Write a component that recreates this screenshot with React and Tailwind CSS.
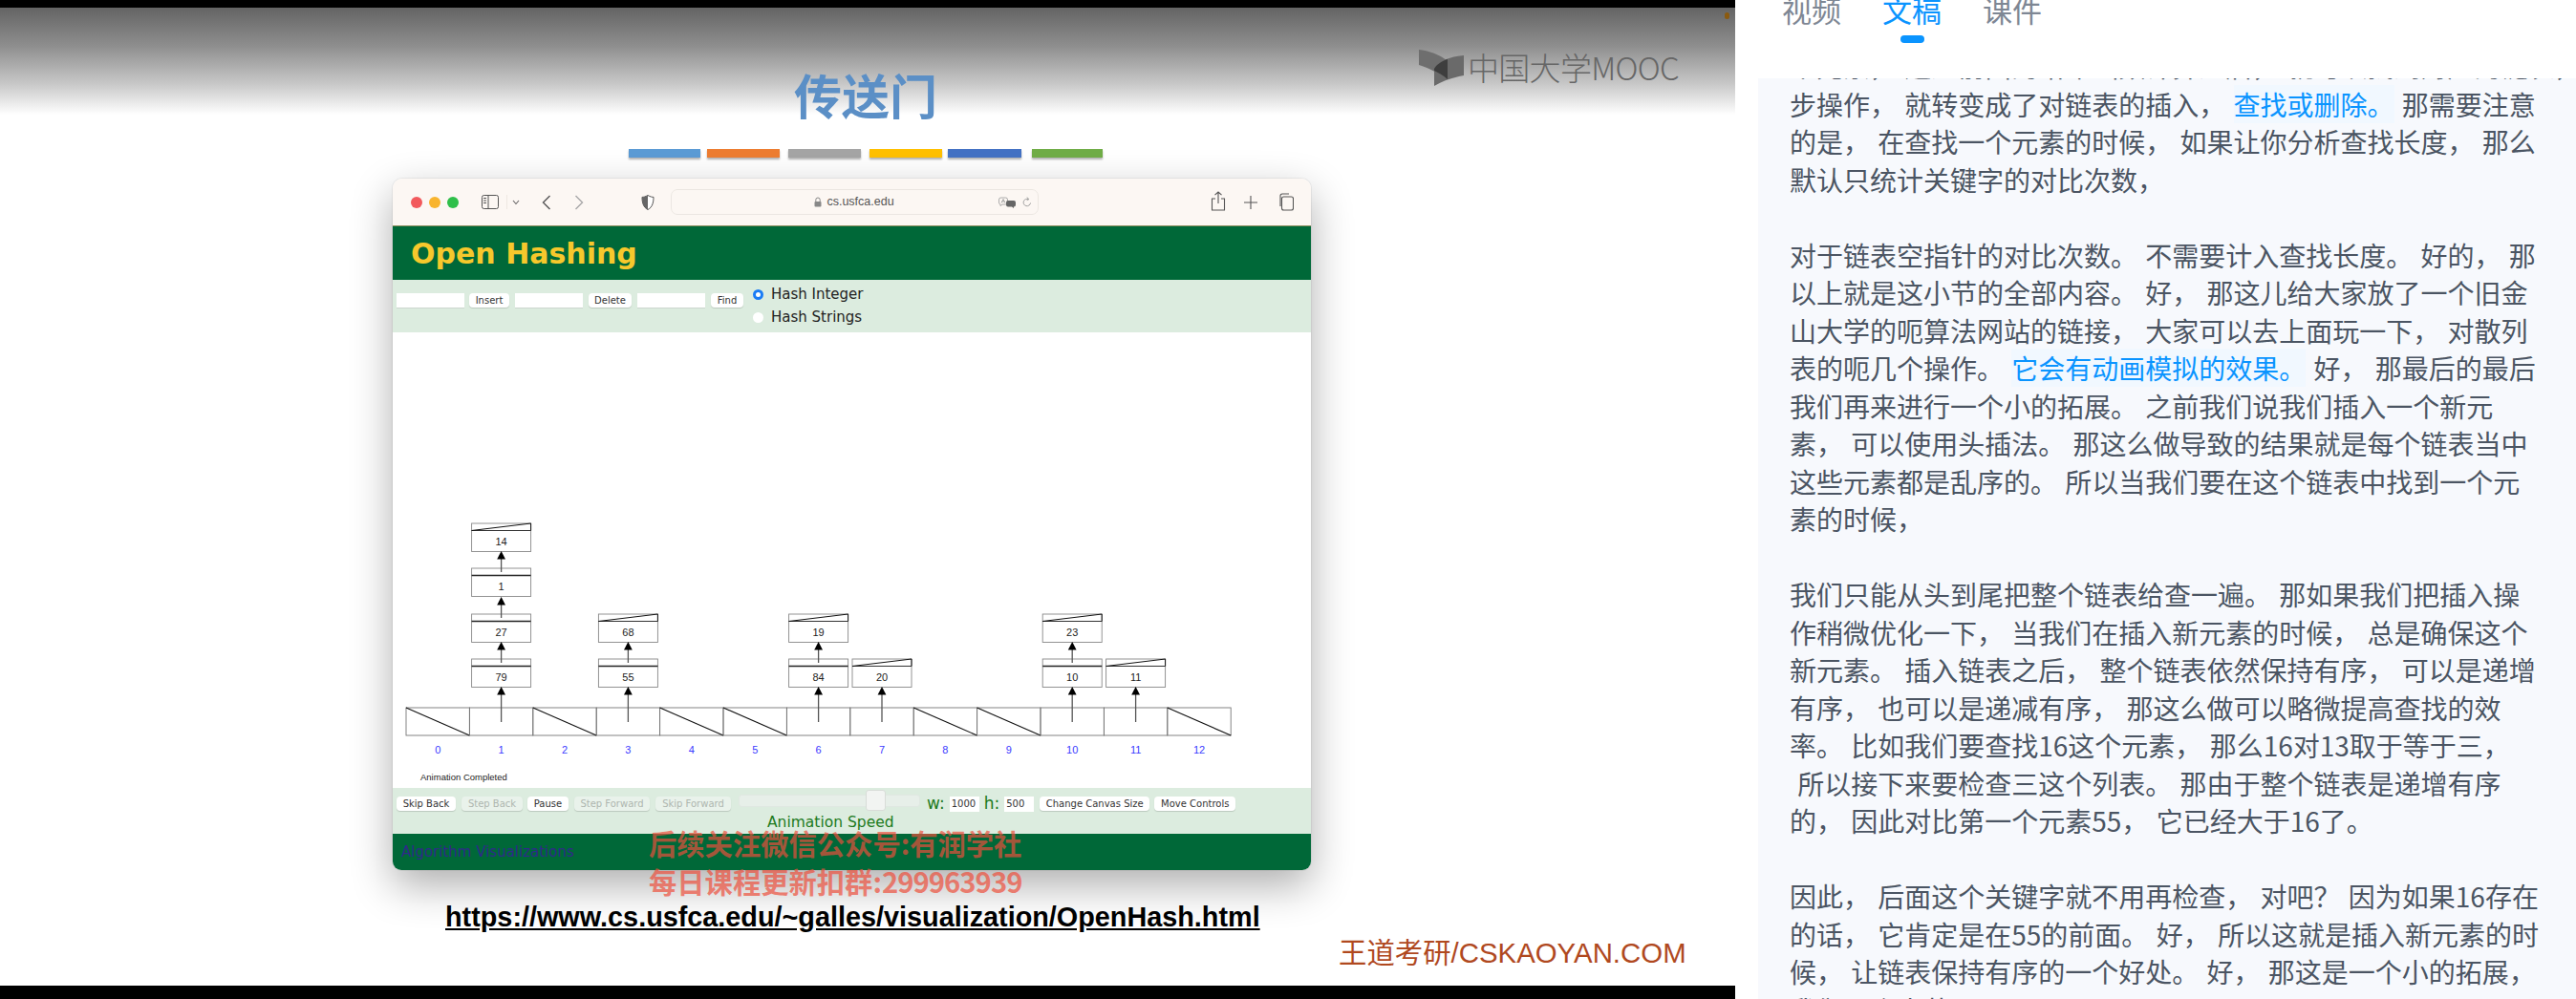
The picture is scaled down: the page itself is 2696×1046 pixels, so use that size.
const CJK = "'Noto Sans CJK SC','Noto Sans',sans-serif";
const ARIAL_CJK = "'Liberation Sans','Noto Sans CJK SC',sans-serif";

const bars = [
  { w: 75, c: "bg-[#5b9bd5]", ml: "ml-0" },
  { w: 76, c: "bg-[#ed7d31]", ml: "ml-[7px]" },
  { w: 76, c: "bg-[#a5a5a5]", ml: "ml-[9px]" },
  { w: 76, c: "bg-[#ffc000]", ml: "ml-[9px]" },
  { w: 77, c: "bg-[#4472c4]", ml: "ml-[6px]" },
  { w: 74, c: "bg-[#70ad47]", ml: "ml-[11px]" },
];

function Btn({ children, w, off }) {
  return (
    <div
      style={{ width: w }}
      className={
        "h-[15px] shrink-0 rounded-[4px] flex items-center justify-center text-[10px] font-['DejaVu_Sans',sans-serif] whitespace-nowrap shadow-[0_1px_1px_rgba(0,0,0,0.15)] " +
        (off ? "bg-[#e9f2eb] text-[#aeb6af]" : "bg-white text-[#333]")
      }
    >
      {children}
    </div>
  );
}

function Field({ w }) {
  return <div style={{ width: w }} className="h-[16px] shrink-0 bg-white border-b border-[#ccd6ce]" />;
}

const X0 = 14;
const CW = 66.4;
const cx = (i) => X0 + CW * i + CW / 2;
const BY = 393;
const rows = [200, 247, 295, 342];
const nodes = [
  { b: 1, r: 3, t: "79", end: false },
  { b: 1, r: 2, t: "27", end: false },
  { b: 1, r: 1, t: "1", end: false },
  { b: 1, r: 0, t: "14", end: true },
  { b: 3, r: 3, t: "55", end: false },
  { b: 3, r: 2, t: "68", end: true },
  { b: 6, r: 3, t: "84", end: false },
  { b: 6, r: 2, t: "19", end: true },
  { b: 7, r: 3, t: "20", end: true },
  { b: 10, r: 3, t: "10", end: false },
  { b: 10, r: 2, t: "23", end: true },
  { b: 11, r: 3, t: "11", end: true },
];
const emptyB = [0, 2, 4, 5, 8, 9, 12];

function Arrow({ x, y1, y2 }) {
  return (
    <g>
      <line x1={x} x2={x} y1={y1} y2={y2 + 8} stroke="#555" strokeWidth="1.3" />
      <path d={`M${x} ${y2}l-4.4 8.5h8.8z`} fill="#000" />
    </g>
  );
}

function Graph() {
  return (
    <svg width="961" height="477" className="block" style={{ fontFamily: "'Liberation Sans',sans-serif" }}>
      {Array.from({ length: 13 }).map((_, i) => (
        <g key={i}>
          <rect x={X0 + CW * i} y={BY} width={CW} height={29} fill="none" stroke="#777" strokeWidth="0.9" />
          {emptyB.includes(i) && (
            <line x1={X0 + CW * i} y1={BY} x2={X0 + CW * (i + 1)} y2={BY + 29} stroke="#111" strokeWidth="1.1" />
          )}
          <text x={cx(i)} y={441} textAnchor="middle" fontSize="11" fill="#3a3aff">{i}</text>
        </g>
      ))}
      {nodes.map((n, i) => {
        const y = rows[n.r];
        const x = cx(n.b);
        return (
          <g key={i}>
            <rect x={x - 31} y={y} width={62} height={29.5} fill="#fff" stroke="#888" strokeWidth="0.9" />
            {n.end ? (
              <>
                <line x1={x - 31} y1={y + 7.5} x2={x + 31} y2={y + 7.5} stroke="#333" strokeWidth="1" />
                <line x1={x - 31} y1={y + 7.5} x2={x + 31} y2={y} stroke="#111" strokeWidth="1" />
                <line x1={x + 31} y1={y} x2={x + 31} y2={y + 7.5} stroke="#111" strokeWidth="1" />
              </>
            ) : (
              <line x1={x - 31} y1={y + 7.5} x2={x + 31} y2={y + 7.5} stroke="#222" strokeWidth="1.5" />
            )}
            <text x={x} y={y + 23} textAnchor="middle" fontSize="11" fill="#222">{n.t}</text>
          </g>
        );
      })}
      {[1, 3, 6, 7, 10, 11].map((b) => (
        <Arrow key={b} x={cx(b)} y1={BY + 15} y2={371} />
      ))}
      {[
        [1, 346, 324],
        [1, 299, 277],
        [1, 251, 229],
        [3, 346, 324],
        [6, 346, 324],
        [10, 346, 324],
      ].map(([b, a, c], i) => (
        <Arrow key={i} x={cx(b)} y1={a} y2={c} />
      ))}
      <text x="29" y="469" fontSize="9.5" fill="#222">Animation Completed</text>
    </svg>
  );
}

function Logo() {
  return (
    <div className="flex items-center h-[39px] mr-[59px] ml-auto -mt-[1px]">
      <svg width="47" height="38" viewBox="0 0 47 38" className="shrink-0 mr-[4px]">
        <path d="M0 0 C10 1 22 5 30 12 L30 31 C22 25 10 19 0 16 Z" fill="#6e6e6e" />
        <path d="M16 38 L16 20 C20 12 32 7 47 6 L47 27 C36 29 26 32 16 38 Z" fill="#6a6a6a" />
        <path d="M16 20 C19 15 24 12 30 10 L30 31 C26 27 20 24 16 22 Z" fill="#3e3e3e" />
      </svg>
      <span className="text-[33px] leading-[39px] text-[#666] tracking-[-0.7px] whitespace-nowrap" style={{ fontFamily: CJK, fontWeight: 300 }}>
        中国大学MOOC
      </span>
    </div>
  );
}

const B = ({ children }) => (
  <span className="text-[#0a94ff] bg-[#f1f8ff]">{children}</span>
);

const lines = [
  "个元素， 通过前面的哈希函数计算之后， 就可以找到对应的链表，",
  <>步操作， 就转变成了对链表的插入， <B>查找或删除。</B> 那需要注意</>,
  "的是， 在查找一个元素的时候， 如果让你分析查找长度， 那么",
  "默认只统计关键字的对比次数，",
  "",
  "对于链表空指针的对比次数。 不需要计入查找长度。 好的， 那",
  "以上就是这小节的全部内容。 好， 那这儿给大家放了一个旧金",
  "山大学的呃算法网站的链接， 大家可以去上面玩一下， 对散列",
  <>表的呃几个操作。 <B>它会有动画模拟的效果。</B> 好， 那最后的最后</>,
  "我们再来进行一个小的拓展。 之前我们说我们插入一个新元",
  "素， 可以使用头插法。 那这么做导致的结果就是每个链表当中",
  "这些元素都是乱序的。 所以当我们要在这个链表中找到一个元",
  "素的时候，",
  "",
  "我们只能从头到尾把整个链表给查一遍。 那如果我们把插入操",
  "作稍微优化一下， 当我们在插入新元素的时候， 总是确保这个",
  "新元素。 插入链表之后， 整个链表依然保持有序， 可以是递增",
  "有序， 也可以是递减有序， 那这么做可以略微提高查找的效",
  "率。 比如我们要查找16这个元素， 那么16对13取于等于三，",
  " 所以接下来要检查三这个列表。 那由于整个链表是递增有序",
  "的， 因此对比第一个元素55， 它已经大于16了。",
  "",
  "因此， 后面这个关键字就不用再检查， 对吧？ 因为如果16存在",
  "的话， 它肯定是在55的前面。 好， 所以这就是插入新元素的时",
  "候， 让链表保持有序的一个好处。 好， 那这是一个小的拓展，",
  "我们下个小节再见。",
];

export default function App() {
  return (
    <div className="flex w-[2696px] h-[1046px] overflow-hidden bg-white">
      <div className="w-[1816px] shrink-0 flex flex-col bg-black">
        <div className="h-[8px] shrink-0" />
        <div className="relative h-[1024px] shrink-0 bg-white bg-[linear-gradient(to_bottom,#646464_0px,#8e8e8e_40px,#c8c8c8_80px,#ffffff_112px)] flex flex-col">
          <div className="flex items-start pt-[44px] pl-[831px] h-[148px] shrink-0">
            <div className="text-[50px] leading-[60px] mt-[16px] font-bold text-[#5b8fc6] whitespace-nowrap" style={{ fontFamily: CJK }}>
              传送门
            </div>
            <Logo />
          </div>
          <div className="flex pl-[658px] h-[31px] shrink-0">
            {bars.map((b, i) => (
              <div key={i} style={{ width: b.w }} className={"h-[9px] shadow-[0_2px_2px_rgba(0,0,0,0.3)] " + b.c + " " + b.ml} />
            ))}
          </div>
          <div className="ml-[411px] w-[961px] shrink-0 rounded-t-[10px] rounded-b-[9px] overflow-hidden shadow-[0_0_0_1px_rgba(0,0,0,0.05),0_16px_44px_rgba(0,0,0,0.32)] flex flex-col">
            <div className="h-[50px] bg-[#fcf7f3] border-b border-[#8a8a5a] flex items-center relative shrink-0">
              <span className="ml-[19px] w-[12px] h-[12px] rounded-full bg-[#f2595c]" />
              <span className="ml-[7px] w-[12px] h-[12px] rounded-full bg-[#f8b42e]" />
              <span className="ml-[7px] w-[12px] h-[12px] rounded-full bg-[#2fbf4a]" />
              <svg width="18" height="15" viewBox="0 0 18 15" className="ml-[24px]" fill="none" stroke="#555" strokeWidth="1">
                <rect x="0.5" y="0.5" width="17" height="14" rx="2" />
                <path d="M7 1v13" />
                <path d="M2 3.5h3M2 6h3M2 8.5h3" />
              </svg>
              <span className="ml-[8px] w-[1px] h-[15px] bg-[#eee8e2]" />
              <svg width="8" height="6" viewBox="0 0 8 6" className="ml-[5px]" fill="none" stroke="#666" strokeWidth="1.1"><path d="M1 1l3 3.5L7 1" /></svg>
              <svg width="10" height="16" viewBox="0 0 10 16" className="ml-[23px]" fill="none" stroke="#555" strokeWidth="1.4"><path d="M8.5 1L1.5 8l7 7" /></svg>
              <svg width="10" height="16" viewBox="0 0 10 16" className="ml-[24px]" fill="none" stroke="#a8a8a8" strokeWidth="1.4"><path d="M1.5 1l7 7-7 7" /></svg>
              <svg width="14" height="16" viewBox="0 0 14 16" className="ml-[60px]"><path d="M7 0.5C4.5 2 2.5 2.4 1 2.4c0 5 1 10.6 6 13.1 5-2.5 6-8.1 6-13.1C11.5 2.4 9.5 2 7 .5z" fill="#fff" stroke="#555" strokeWidth="1" /><path d="M7 0.5C4.5 2 2.5 2.4 1 2.4c0 5 1 10.6 6 13.1z" fill="#666" /></svg>
              <div className="ml-[17px] w-[385px] h-[27px] border border-[#ece7e2] rounded-[7px] relative flex items-center justify-center">
                <svg width="8" height="11" viewBox="0 0 8 11" className="mr-[5px] ml-[-1px]"><path d="M1.8 5V3.2a2.2 2.2 0 014.4 0V5" fill="none" stroke="#888" strokeWidth="1" /><rect x="0.5" y="5" width="7" height="5.5" rx="1" fill="#888" /></svg>
                <span className="text-[12.5px] text-[#555] font-['Liberation_Sans',sans-serif]">cs.usfca.edu</span>
                <svg width="19" height="12" viewBox="0 0 19 12" className="absolute right-[22px] top-[7px]" fill="none" stroke="#999" strokeWidth="0.8"><path d="M2.5 1h5a2 2 0 012 2v3a2 2 0 01-2 2H4L2 9.5V8A2 2 0 01.5 6V3a2 2 0 012-2z" /><path d="M3 6.5L5 2.5l2 4M3.8 5h2.4" /><path d="M10 4h6a2 2 0 012 2v2.5a2 2 0 01-2 2V12l-2-1.5h-4a2 2 0 01-2-2V6a2 2 0 012-2z" fill="#666" stroke="none" /></svg>
                <svg width="10" height="12" viewBox="0 0 10 12" className="absolute right-[6px] top-[7px]" fill="none" stroke="#999" strokeWidth="0.9"><path d="M8.5 6.5a3.7 3.7 0 11-2-3.8M5 0.5l1.7 2.2-2 1" /></svg>
              </div>
              <svg width="16" height="21" viewBox="0 0 16 21" className="absolute left-[856px] top-[13px]" fill="none" stroke="#555" strokeWidth="1.1"><path d="M5 8H1.5v12h13V8H11M8 13V1M4.5 4.2L8 1l3.5 3.2" /></svg>
              <svg width="14" height="14" viewBox="0 0 14 14" className="absolute left-[891px] top-[18px]" fill="none" stroke="#555" strokeWidth="1.1"><path d="M7 0v14M0 7h14" /></svg>
              <svg width="17" height="19" viewBox="0 0 17 19" className="absolute left-[926px] top-[15px]" fill="none" stroke="#555" strokeWidth="1.1"><rect x="4.5" y="4" width="12" height="14" rx="2" /><path d="M3 14V3a2 2 0 012-2h7" /></svg>
            </div>
            <div className="h-[56px] bg-[#006838] flex items-center pl-[19px] shrink-0">
              <span className="text-[30px] font-bold text-[#f7c82c] font-['DejaVu_Sans',sans-serif] whitespace-nowrap">Open Hashing</span>
            </div>
            <div className="h-[55px] bg-[#dcecdf] flex pl-[4px] pt-[14px] shrink-0">
              <Field w={71} />
              <div className="ml-[5px]"><Btn w={42}>Insert</Btn></div>
              <div className="ml-[6px]"><Field w={71} /></div>
              <div className="ml-[6px]"><Btn w={45}>Delete</Btn></div>
              <div className="ml-[6px]"><Field w={71} /></div>
              <div className="ml-[6px]"><Btn w={34}>Find</Btn></div>
              <div className="ml-[10px] -mt-[10px] flex flex-col text-[15px] leading-[23.5px] text-[#222] font-['DejaVu_Sans',sans-serif]">
                <div className="flex items-center whitespace-nowrap">
                  <span className="w-[11px] h-[11px] rounded-full border-[3px] border-[#1a7cf5] bg-white mr-[8px]" />Hash Integer
                </div>
                <div className="flex items-center whitespace-nowrap">
                  <span className="w-[11px] h-[11px] rounded-full bg-white mr-[8px]" />Hash Strings
                </div>
              </div>
            </div>
            <div className="bg-white shrink-0 h-[477px]"><Graph /></div>
            <div className="h-[48px] bg-[#dcecdf] relative flex pl-[4px] pt-[9px] shrink-0">
              <Btn w={62}>Skip Back</Btn>
              <div className="ml-[6px]"><Btn w={64} off>Step Back</Btn></div>
              <div className="ml-[5px]"><Btn w={43}>Pause</Btn></div>
              <div className="ml-[6px]"><Btn w={79} off>Step Forward</Btn></div>
              <div className="ml-[6px]"><Btn w={79} off>Skip Forward</Btn></div>
              <div className="ml-[8px] flex flex-col w-[190px] shrink-0">
                <div className="relative h-[13px] -mt-[2px] rounded-[3px] bg-[#e7efe9] border border-[#e0e8e2]">
                  <div className="absolute left-[132px] -top-[6px] w-[21px] h-[22px] rounded-[3px] bg-[#f2f4f2] border border-[#d8dcd8]" />
                </div>
                <div className="mt-[7px] text-[15.5px] leading-[18px] text-[#1c7a1c] font-['DejaVu_Sans',sans-serif] whitespace-nowrap ml-[30px]">Animation Speed</div>
              </div>
              <div className="ml-[7px] text-[17px] leading-[14px] text-[#1c7a1c] font-['DejaVu_Sans',sans-serif]">w:</div>
              <div className="ml-[5px] w-[31px] h-[16px] bg-white text-[10px] leading-[16px] pl-[2px] text-[#333] font-['DejaVu_Sans',sans-serif]">1000</div>
              <div className="ml-[5px] text-[17px] leading-[14px] text-[#1c7a1c] font-['DejaVu_Sans',sans-serif]">h:</div>
              <div className="ml-[5px] w-[31px] h-[16px] bg-white text-[10px] leading-[16px] pl-[2px] text-[#333] font-['DejaVu_Sans',sans-serif]">500</div>
              <div className="ml-[6px]"><Btn w={115}>Change Canvas Size</Btn></div>
              <div className="ml-[5px]"><Btn w={85}>Move Controls</Btn></div>
            </div>
            <div className="h-[38px] bg-[#006838] flex items-center pl-[9px] shrink-0">
              <span className="text-[15px] text-[#2f2a8a] font-['DejaVu_Sans',sans-serif] whitespace-nowrap">Algorithm Visualizations</span>
            </div>
          </div>
          <div className="pl-[466px] mt-[31px] shrink-0">
            <span className="text-[28.8px] leading-[36px] font-bold underline text-black font-['Liberation_Sans',sans-serif] whitespace-nowrap">https://www.cs.usfca.edu/~galles/visualization/OpenHash.html</span>
          </div>
          <div className="pl-[1401px] mt-[2px] shrink-0 text-[29.4px] leading-[36px] text-[#b0491f] whitespace-nowrap" style={{ fontFamily: ARIAL_CJK }}>
            王道考研/CSKAOYAN.COM
          </div>
          <div className="absolute left-[679px] top-[854px] text-[29.3px] leading-[40px] font-bold text-[#ee4f3c]/70 whitespace-nowrap" style={{ fontFamily: CJK }}>
            <div>后续关注微信公众号:有润学社</div>
            <div>每日课程更新扣群:<span className="tracking-[-1px]">299963939</span></div>
          </div>
          <div className="absolute left-[1805px] top-[5px] w-[5px] h-[7px] rounded-full bg-[#8a5a10]" />
        </div>
        <div className="flex-1" />
      </div>
      <div className="flex-1 flex flex-col pl-[24px] min-w-0">
        <div className="h-[82px] shrink-0 relative">
          <div className="flex pl-[25px] gap-[43px] text-[31px] leading-[40px] -mt-[10px] text-[#7e8794]" style={{ fontFamily: CJK }}>
            <span>视频</span>
            <span className="text-[#0a94ff]">文稿</span>
            <span>课件</span>
          </div>
          <div className="ml-[149px] mt-[7px] w-[25px] h-[8px] rounded-full bg-[#0a94ff]" />
        </div>
        <div className="flex-1 min-h-0 overflow-hidden bg-[#f7f9fd] pl-[33px]">
          <div className="-mt-[32px] text-[28px] leading-[39.5px] text-[#4b5563] [word-spacing:2px]" style={{ fontFamily: CJK }}>
            {lines.map((l, i) => (
              <div key={i} className="h-[39.5px] whitespace-pre">{l}</div>
            ))}
          </div>
        </div>
      </div>
    </div>
  );
}
